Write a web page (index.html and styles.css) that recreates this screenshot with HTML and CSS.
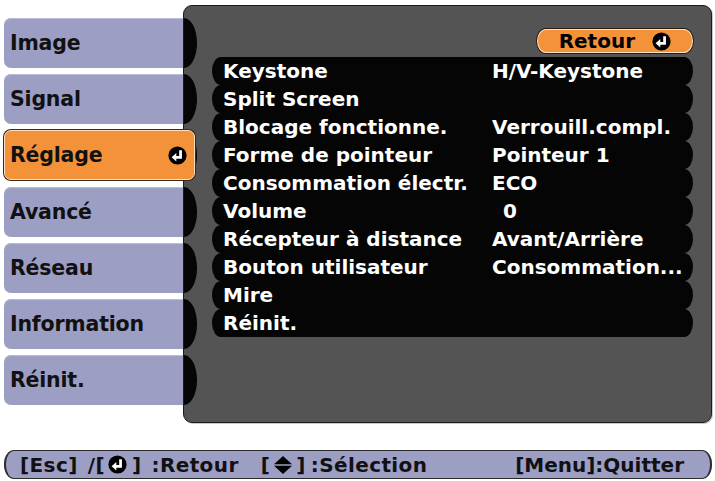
FILE: index.html
```html
<!DOCTYPE html>
<html lang="fr">
<head>
<meta charset="utf-8">
<title>Réglage</title>
<link rel="stylesheet" href="styles.css">
</head>
<body>
<div class="screen">
  <div class="main">
    <nav class="tabs">
      <div class="tab">Image</div>
      <div class="tab">Signal</div>
      <div class="tab active"><span>Réglage</span>
        <svg class="enter" viewBox="0 0 18 18" width="19" height="19"><circle cx="9" cy="9" r="8.6" fill="#000"/><path d="M11.9 4V10.7H7.4" fill="none" stroke="#fff" stroke-width="2.6"/><path d="M3.4 10.7L7.9 6.7V14.7Z" fill="#fff"/></svg>
      </div>
      <div class="tab">Avancé</div>
      <div class="tab">Réseau</div>
      <div class="tab">Information</div>
      <div class="tab">Réinit.</div>
    </nav>
    <section class="panel">
      <div class="notches">
        <i></i><i></i><i></i><i></i><i></i><i></i><i></i>
      </div>
      <div class="content">
        <div class="back-row">
          <div class="back"><span>Retour</span>
            <svg class="enter" viewBox="0 0 18 18" width="19" height="19"><circle cx="9" cy="9" r="8.6" fill="#000"/><path d="M11.9 4V10.7H7.4" fill="none" stroke="#fff" stroke-width="2.6"/><path d="M3.4 10.7L7.9 6.7V14.7Z" fill="#fff"/></svg>
          </div>
        </div>
        <ul class="rows">
          <li><span class="label">Keystone</span><span class="value">H/V-Keystone</span></li>
          <li><span class="label">Split Screen</span><span class="value"></span></li>
          <li><span class="label">Blocage fonctionne.</span><span class="value">Verrouill.compl.</span></li>
          <li><span class="label">Forme de pointeur</span><span class="value">Pointeur 1</span></li>
          <li><span class="label">Consommation électr.</span><span class="value">ECO</span></li>
          <li><span class="label">Volume</span><span class="value indent">0</span></li>
          <li><span class="label">Récepteur à distance</span><span class="value">Avant/Arrière</span></li>
          <li><span class="label">Bouton utilisateur</span><span class="value">Consommation...</span></li>
          <li><span class="label">Mire</span><span class="value"></span></li>
          <li><span class="label">Réinit.</span><span class="value"></span></li>
        </ul>
      </div>
    </section>
  </div>
  <footer class="help">
    <div class="help-left">
      <span>[Esc]</span>
      <span class="g10">/[</span>
      <svg class="enter g3" viewBox="0 0 18 18" width="19" height="19"><circle cx="9" cy="9" r="8.6" fill="#000"/><path d="M11.9 4V10.7H7.4" fill="none" stroke="#fff" stroke-width="2.6"/><path d="M3.4 10.7L7.9 6.7V14.7Z" fill="#fff"/></svg>
      <span class="g5">]</span>
      <span class="g10">:Retour</span>
      <span class="g20">[</span>
      <svg class="updown g3" viewBox="0 0 20 20" width="20" height="20"><path d="M10 1L19 9.2H1Z" fill="#000"/><path d="M1 10.8H19L10 19Z" fill="#000"/></svg>
      <span class="g3">]</span>
      <span class="g5">:Sélection</span>
    </div>
    <div class="help-right">[Menu]:Quitter</div>
  </footer>
</div>
</body>
</html>
```

FILE: styles.css
```css
* { box-sizing: border-box; }
html, body {
  margin: 0;
  padding: 0;
  background: #ffffff;
}
body {
  font-family: "DejaVu Sans", Verdana, sans-serif;
  font-weight: bold;
  font-size: 20px;
  width: 715px;
  height: 481px;
  overflow: hidden;
}
.screen {
  padding: 5px 3px 0 4px;
  display: flex;
  flex-direction: column;
}
.main {
  display: flex;
  height: 418px;
}
.tabs {
  width: 179px;
  flex: none;
  padding-top: 13px;
  display: flex;
  flex-direction: column;
  gap: 6.2px;
}
.tab {
  height: 50px;
  background: #9c9ec4;
  border-radius: 7px 0 0 7px;
  color: #111;
  display: flex;
  align-items: center;
  padding-left: 6px;
  font-size: 20.5px;
  letter-spacing: -0.2px;
  box-shadow: inset 0 1px 0 #b9bbd8;
}
.tab.active {
  width: 191px;
  position: relative;
  z-index: 2;
  background: #f4923a;
  border-radius: 7px;
  border: 1px solid #fbe0c6;
  box-shadow: 0 0 0 1px #3a2a1a;
  justify-content: space-between;
  padding-right: 7px;
  padding-left: 5px;
}
.enter { display: block; flex: none; }
.panel {
  flex: 1;
  background: #545454;
  border: 1px solid #1c1c1c;
  border-radius: 9px;
  box-shadow: 1px 1px 0 #c8c8c8;
  display: flex;
}
.notches {
  width: 13px;
  flex: none;
  padding-top: 12px;
  display: flex;
  flex-direction: column;
  gap: 6.2px;
}
.notches i {
  display: block;
  height: 50px;
  background: #050505;
  border-radius: 0 13px 13px 0 / 0 25px 25px 0;
}
.content {
  flex: 1;
  padding: 23px 18px 0 15px;
  display: flex;
  flex-direction: column;
}
.back-row {
  display: flex;
  justify-content: flex-end;
  margin-bottom: 4px;
}
.back {
  width: 156px;
  height: 24px;
  background: #f4923a;
  border: 1px solid #fde3c9;
  box-shadow: 0 0 0 1px #2a1d10;
  border-radius: 9px / 12px;
  color: #000;
  display: flex;
  align-items: center;
  justify-content: flex-end;
  gap: 17px;
  padding-right: 21px;
  line-height: 22px;
}
.rows {
  list-style: none;
  margin: 0;
  padding: 0;
}
.rows li {
  height: 28px;
  background: #050505;
  border-radius: 9px / 14px;
  color: #fff;
  display: flex;
  align-items: center;
  padding-left: 11px;
  line-height: 28px;
  white-space: nowrap;
}
.label { width: 269px; flex: none; }
.value.indent { padding-left: 11px; }
.help {
  margin-top: 27px;
  height: 29px;
  background: #9c9ec4;
  border: 1.5px solid #2b2b2b;
  border-left-width: 2.5px;
  border-right-width: 2.5px;
  border-radius: 10px / 14px;
  color: #111;
  display: flex;
  align-items: center;
  justify-content: space-between;
  padding: 0 26px 0 14px;
  white-space: nowrap;
}
.help-left {
  display: flex;
  align-items: center;
  letter-spacing: 0.4px;
}
.g3 { margin-left: 3px; }
.g5 { margin-left: 5px; }
.g10 { margin-left: 10px; }
.g20 { margin-left: 22px; }
.updown { display: block; flex: none; }
```
